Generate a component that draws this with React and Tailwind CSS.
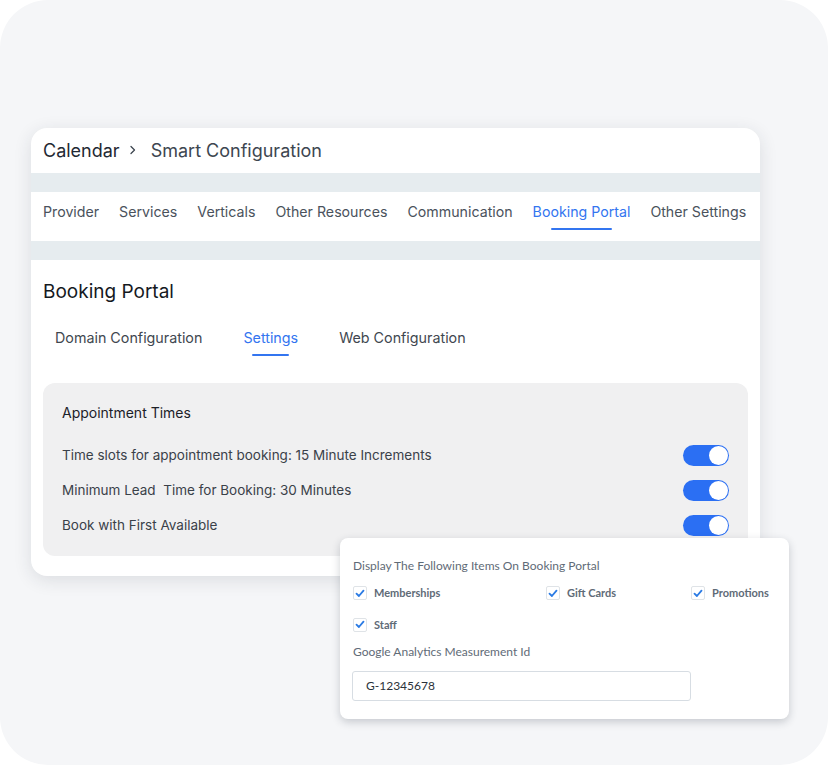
import React from 'react';

const mainTabs = ['Provider', 'Services', 'Verticals', 'Other Resources', 'Communication', 'Booking Portal', 'Other Settings'];
const subTabs = ['Domain Configuration', 'Settings', 'Web Configuration'];
const appointmentRows = [
    'Time slots for appointment booking: 15 Minute Increments',
    'Minimum Lead  Time for Booking: 30 Minutes',
    'Book with First Available',
];

function Toggle() {
    return (
        <div className="w-[46px] h-[21px] rounded-full bg-[#2b6ff3] flex items-center justify-end pr-[1px]">
            <div className="w-[19px] h-[19px] rounded-full bg-white"></div>
        </div>
    );
}

function Check({ label }) {
    return (
        <div className="flex items-center">
            <div className="w-[14px] h-[14px] border border-[#dfe3e7] rounded-[2px] bg-white flex items-center justify-center mr-[7px]">
                <svg width="10" height="9" viewBox="0 0 10 9" fill="none">
                    <path d="M1.5 4.6 L3.9 7 L8.5 1.6" stroke="#2b7be4" strokeWidth="1.8" strokeLinecap="round" strokeLinejoin="round" />
                </svg>
            </div>
            <span className="text-[11px] font-bold text-[#5f6b77]">{label}</span>
        </div>
    );
}

export default function App() {
    return (
        <div className="w-[828px] h-[765px] bg-white">
            <div className="relative w-full h-full rounded-[48px] bg-[#f5f6f8] pt-[128px] pl-[31px] font-['Inter',sans-serif]">
                {/* main card */}
                <div className="w-[729px] h-[448px] bg-white rounded-[16px] shadow-[0_4px_18px_rgba(30,40,60,0.12)] overflow-hidden">
                    <div className="h-[45px] flex items-center px-[12px] text-[18px] pb-[1px]">
                        <span className="text-[#1f2933]">Calendar</span>
                        <svg className="ml-[8px]" width="9" height="10" viewBox="0 0 9 10" fill="none">
                            <path d="M3 1.5 L6.5 5 L3 8.5" stroke="#3d4650" strokeWidth="1.3" strokeLinecap="round" strokeLinejoin="round" />
                        </svg>
                        <span className="text-[#3d4650] ml-[14px]">Smart Configuration</span>
                    </div>
                    <div className="h-[19px] bg-[#e6ecef]"></div>
                    <div className="h-[49px] flex items-start gap-[20px] px-[12px] pt-[9px] text-[14.2px] text-[#4a525c]">
                        {mainTabs.map((tab) => (
                            <div key={tab} className="relative h-[29px]">
                                <span className={tab === 'Booking Portal' ? 'text-[#3375f0]' : ''}>{tab}</span>
                                {tab === 'Booking Portal' && (
                                    <div className="absolute left-[18px] right-[18px] bottom-[0px] h-[2px] rounded-full bg-[#3375f0]"></div>
                                )}
                            </div>
                        ))}
                    </div>
                    <div className="h-[19px] bg-[#e6ecef]"></div>

                    <div className="px-[12px]">
                        <h2 className="text-[19px] text-[#15191e] mt-[20px] leading-[24px]">Booking Portal</h2>
                        <div className="flex gap-[41px] pl-[12px] mt-[23px] text-[14.3px] text-[#3f4750]">
                            {subTabs.map((tab) => (
                                <div key={tab} className="relative h-[30px]">
                                    <span className={tab === 'Settings' ? 'text-[#3375f0]' : ''}>{tab}</span>
                                    {tab === 'Settings' && (
                                        <div className="absolute left-[9px] right-[9px] bottom-[1px] h-[2px] rounded-full bg-[#3375f0]"></div>
                                    )}
                                </div>
                            ))}
                        </div>

                        <div className="mt-[26px] h-[173px] rounded-[12px] bg-[#f0f0f1] pl-[19px] pr-[19px] pt-[20px]">
                            <div className="text-[14px] text-[#1c2128] leading-[20px]">Appointment Times</div>
                            <div className="mt-[22px] flex flex-col gap-[14px]">
                                {appointmentRows.map((row) => (
                                    <div key={row} className="flex items-center justify-between h-[21px]">
                                        <span className="text-[13.5px] text-[#3a4149] whitespace-pre">{row}</span>
                                        <Toggle />
                                    </div>
                                ))}
                            </div>
                        </div>
                    </div>
                </div>

                {/* floating popup */}
                <div className="absolute left-[340px] top-[538px] w-[449px] h-[181px] bg-white rounded-[8px] shadow-[0_3px_8px_rgba(30,40,60,0.22)] px-[12px] pt-[20px] font-['Lato',sans-serif]">
                    <div className="text-[12px] text-[#5f6b77] leading-[16px] pl-[1px]">Display The Following Items On Booking Portal</div>
                    <div className="mt-[11px] grid grid-cols-[193px_145px_1fr] pl-[1px]">
                        <Check label="Memberships" />
                        <Check label="Gift Cards" />
                        <Check label="Promotions" />
                    </div>
                    <div className="mt-[15px] pl-[1px]">
                        <Check label="Staff" />
                    </div>
                    <div className="mt-[11px] text-[12px] text-[#5f6b77] leading-[16px] pl-[1px]">Google Analytics Measurement Id</div>
                    <div className="mt-[11px] w-[339px] h-[30px] border border-[#d7dde3] rounded-[3px] flex items-center pl-[13px] text-[12px] text-[#2b323a]">
                        G-12345678
                    </div>
                </div>
            </div>
        </div>
    );
}
